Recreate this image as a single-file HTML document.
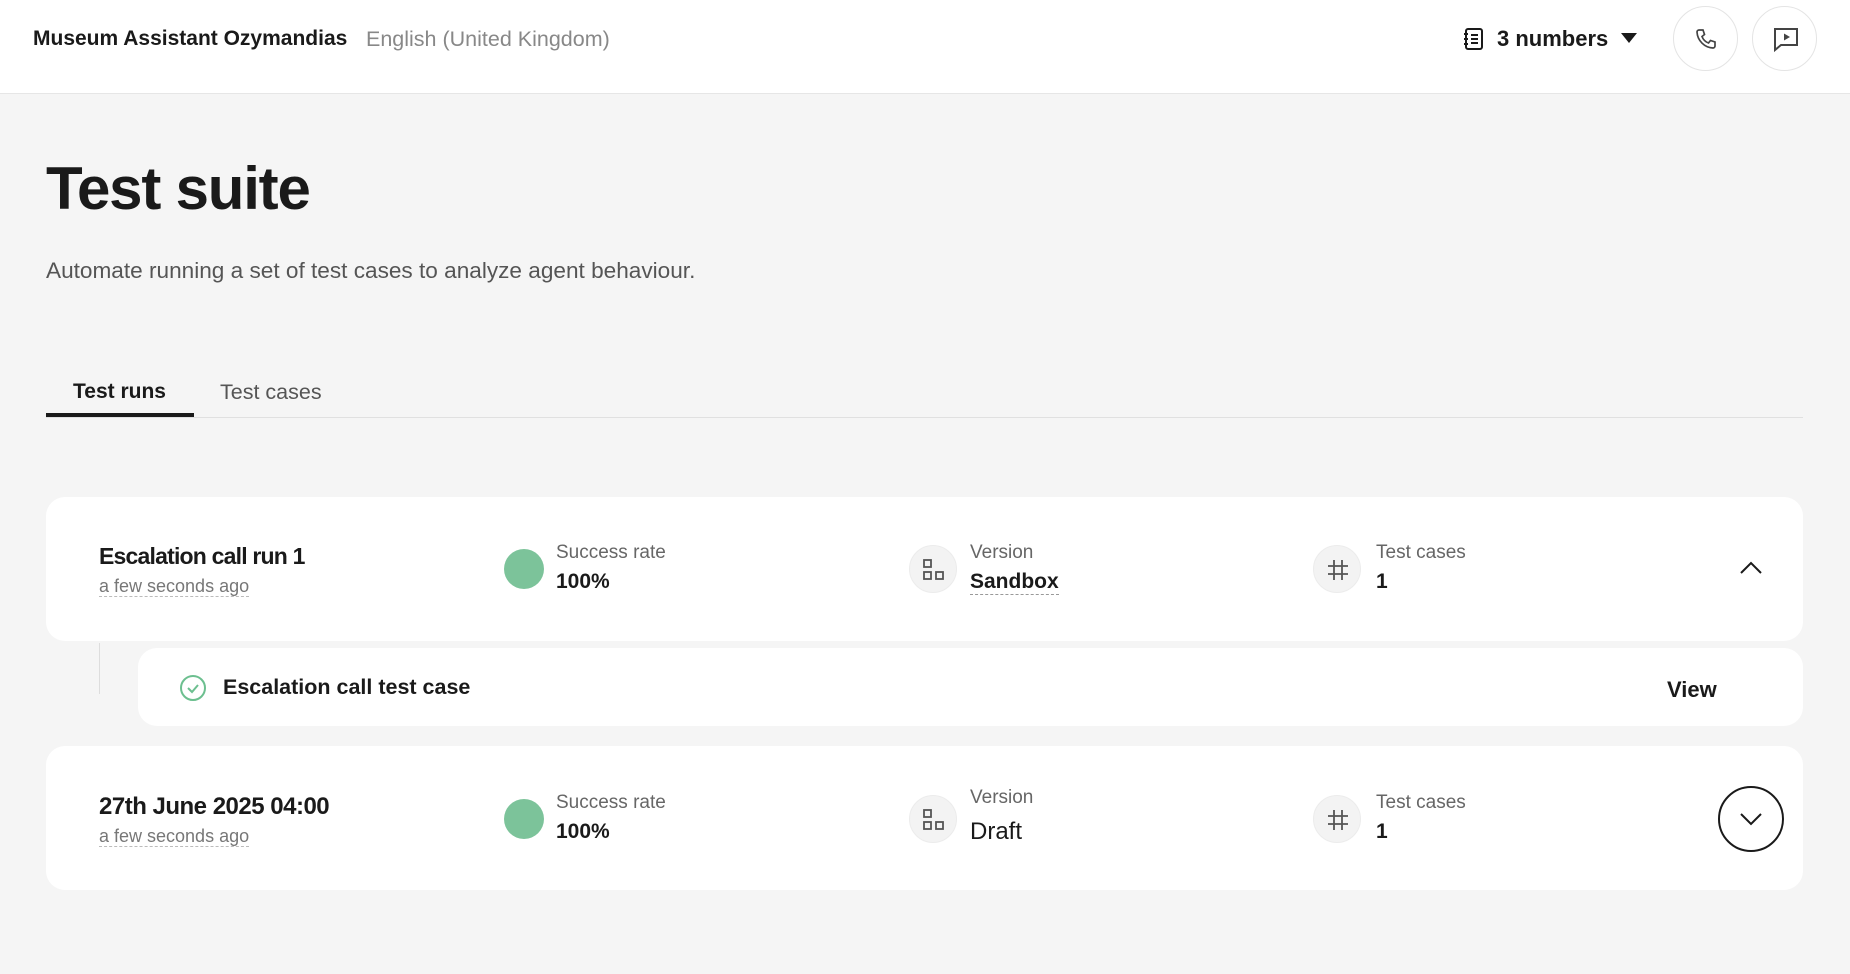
<!DOCTYPE html>
<html><head><meta charset="utf-8"><style>
*{box-sizing:border-box;margin:0;padding:0}
body{width:1850px;height:974px;background:#f5f5f5;font-family:"Liberation Sans",sans-serif;color:#1a1a1a;position:relative;overflow:hidden}
.a{position:absolute;white-space:nowrap}
.hdr{position:absolute;left:0;top:0;width:1850px;height:94px;background:#fff;border-bottom:1px solid #e6e6e6}
.circ{position:absolute;border:1px solid #e4e4e4;border-radius:50%;background:#fff}
.card{position:absolute;background:#fff;border-radius:19px}
.lbl{font-size:19px;color:#666}
.val{font-size:21px;color:#1a1a1a;font-weight:bold}
.ic{position:absolute;width:48px;height:48px;border-radius:50%;background:#f3f3f3;border:1px solid #ececec}
.pie{position:absolute;width:40px;height:40px;border-radius:50%;background:#7cc39a}
.sub{font-size:18px;color:#777;border-bottom:1px dashed #bbb;line-height:20px}
</style></head><body>
<div class="hdr">
<div class="a" style="left:33px;top:27px;font-size:21px;font-weight:bold">Museum Assistant Ozymandias</div>
<div class="a" style="left:366px;top:27px;font-size:21.5px;color:#888">English (United Kingdom)</div>
<svg class="a" style="left:1462px;top:27px" width="24" height="24" viewBox="0 0 24 24" fill="none" stroke="#1a1a1a" stroke-width="2"><rect x="4" y="2" width="16" height="20" rx="2"/><path d="M2 7h4M2 12h4M2 17h4M9 8h7M9 12h7M9 16h7"/></svg>
<div class="a" style="left:1497px;top:26px;font-size:22px;font-weight:bold">3 numbers</div>
<svg class="a" style="left:1621px;top:33px" width="16" height="10"><path d="M0 0h16L8 10z" fill="#1a1a1a"/></svg>
<div class="circ" style="left:1673px;top:6px;width:65px;height:65px"><svg style="position:absolute;left:20px;top:20px" width="24" height="24" viewBox="0 0 24 24" fill="none" stroke="#444" stroke-width="1.7"><path d="M5 3l4 0 1.5 4.5-2.5 2a11 11 0 0 0 6.5 6.5l2-2.5L21 15v4a2 2 0 0 1-2 2A17 17 0 0 1 3 5a2 2 0 0 1 2-2z"/></svg></div>
<div class="circ" style="left:1752px;top:6px;width:65px;height:65px"><svg style="position:absolute;left:19px;top:19px" width="28" height="28" viewBox="0 0 28 28" fill="none" stroke="#444" stroke-width="2"><path d="M3 3h22v16H9l-6 5z"/><path d="M12 7.5v7l6-3.5z" fill="#444" stroke="none"/></svg></div>
</div>
<div class="a" style="left:46px;top:154px;font-size:60px;font-weight:bold;letter-spacing:-1.2px">Test suite</div>
<div class="a" style="left:46px;top:258px;font-size:22.6px;color:#555">Automate running a set of test cases to analyze agent behaviour.</div>
<div class="a" style="left:73px;top:380px;font-size:21px;font-weight:bold">Test runs</div>
<div class="a" style="left:220px;top:380px;font-size:21.5px;color:#555">Test cases</div>
<div class="a" style="left:46px;top:417px;width:1757px;height:1px;background:#e0e0e0"></div>
<div class="a" style="left:46px;top:413px;width:148px;height:4px;background:#1a1a1a"></div>

<div class="card" style="left:46px;top:497px;width:1757px;height:144px"></div>
<div class="a" style="left:99px;top:543px;font-size:23px;font-weight:bold;letter-spacing:-0.8px">Escalation call run 1</div>
<div class="a sub" style="left:99px;top:576px">a few seconds ago</div>
<div class="pie" style="left:504px;top:549px"></div>
<div class="a lbl" style="left:556px;top:542px">Success rate</div>
<div class="a val" style="left:556px;top:570px">100%</div>
<div class="ic" style="left:909px;top:545px"><svg style="position:absolute;left:12px;top:12px" width="24" height="24" viewBox="0 0 24 24" fill="none" stroke="#555" stroke-width="1.8"><rect x="2" y="2" width="7" height="7"/><rect x="2" y="14" width="7" height="7"/><rect x="14" y="14" width="7" height="7"/></svg></div>
<div class="a lbl" style="left:970px;top:542px">Version</div>
<div class="a val" style="left:970px;top:570px;border-bottom:1px dashed #999;line-height:24px">Sandbox</div>
<div class="ic" style="left:1313px;top:545px"><svg style="position:absolute;left:12px;top:12px" width="24" height="24" viewBox="0 0 24 24" fill="none" stroke="#555" stroke-width="1.8"><path d="M8 2v20M16 2v20M2 8h20M2 16h20"/></svg></div>
<div class="a lbl" style="left:1376px;top:542px">Test cases</div>
<div class="a val" style="left:1376px;top:570px">1</div>
<svg class="a" style="left:1739px;top:561px" width="24" height="14"><path d="M2 12l10-10 10 10" fill="none" stroke="#1a1a1a" stroke-width="2"/></svg>

<div class="a" style="left:99px;top:643px;width:1px;height:51px;background:#ddd"></div>
<div class="card" style="left:138px;top:648px;width:1665px;height:78px"></div>
<svg class="a" style="left:179px;top:674px" width="28" height="28" viewBox="0 0 28 28" fill="none" stroke="#6cbf8f" stroke-width="2"><circle cx="14" cy="14" r="12"/><path d="M9 14l4 4 6-7"/></svg>
<div class="a" style="left:223px;top:675px;font-size:21.5px;font-weight:bold">Escalation call test case</div>
<div class="a" style="left:1667px;top:677px;font-size:22px;font-weight:bold">View</div>

<div class="card" style="left:46px;top:746px;width:1757px;height:144px"></div>
<div class="a" style="left:99px;top:793px;font-size:24px;font-weight:bold;letter-spacing:-0.5px">27th June 2025 04:00</div>
<div class="a sub" style="left:99px;top:826px">a few seconds ago</div>
<div class="pie" style="left:504px;top:799px"></div>
<div class="a lbl" style="left:556px;top:792px">Success rate</div>
<div class="a val" style="left:556px;top:820px">100%</div>
<div class="ic" style="left:909px;top:795px"><svg style="position:absolute;left:12px;top:12px" width="24" height="24" viewBox="0 0 24 24" fill="none" stroke="#555" stroke-width="1.8"><rect x="2" y="2" width="7" height="7"/><rect x="2" y="14" width="7" height="7"/><rect x="14" y="14" width="7" height="7"/></svg></div>
<div class="a lbl" style="left:970px;top:787px">Version</div>
<div class="a" style="left:970px;top:818px;font-size:24px">Draft</div>
<div class="ic" style="left:1313px;top:795px"><svg style="position:absolute;left:12px;top:12px" width="24" height="24" viewBox="0 0 24 24" fill="none" stroke="#555" stroke-width="1.8"><path d="M8 2v20M16 2v20M2 8h20M2 16h20"/></svg></div>
<div class="a lbl" style="left:1376px;top:792px">Test cases</div>
<div class="a val" style="left:1376px;top:820px">1</div>
<div class="a" style="left:1718px;top:786px;width:66px;height:66px;border:2px solid #1a1a1a;border-radius:50%"><svg style="position:absolute;left:19px;top:24px" width="24" height="14"><path d="M2 2l10 10 10-10" fill="none" stroke="#1a1a1a" stroke-width="2"/></svg></div>
</body></html>
